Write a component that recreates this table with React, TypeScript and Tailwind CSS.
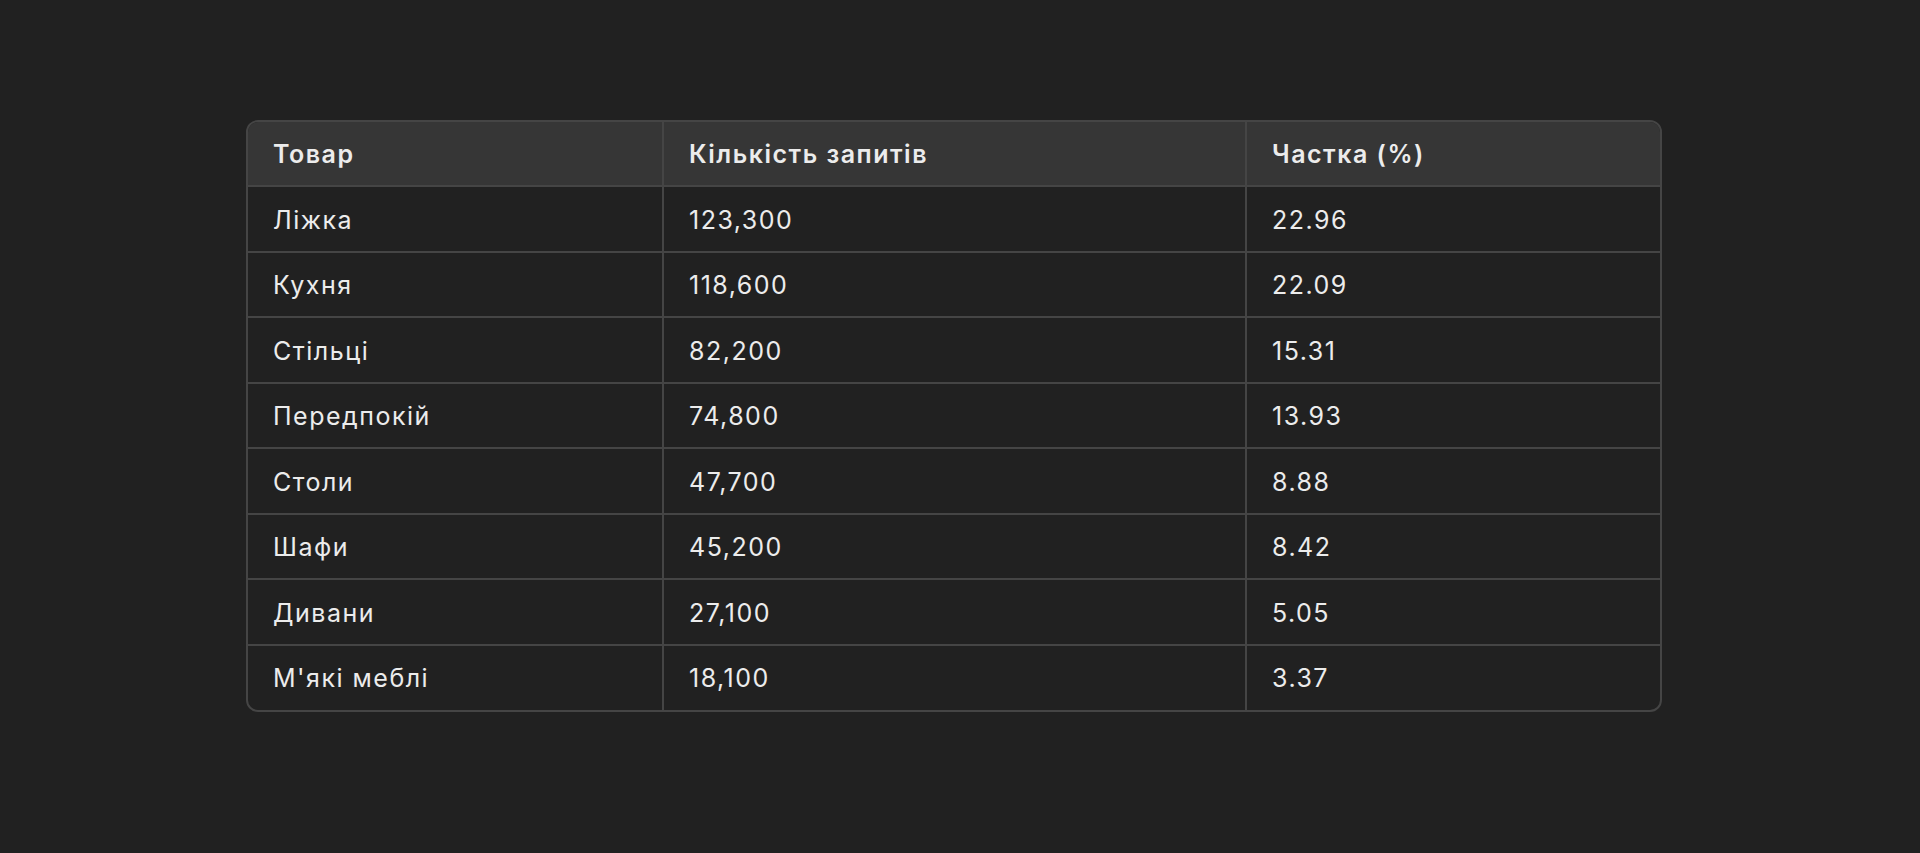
import React from "react";

const rows: [string, string, string][] = [
  ["Ліжка", "123,300", "22.96"],
  ["Кухня", "118,600", "22.09"],
  ["Стільці", "82,200", "15.31"],
  ["Передпокій", "74,800", "13.93"],
  ["Столи", "47,700", "8.88"],
  ["Шафи", "45,200", "8.42"],
  ["Дивани", "27,100", "5.05"],
  ["М'які меблі", "18,100", "3.37"],
];

export default function App() {
  return (
    <div
      className="w-[1920px] h-[853px] bg-[#212121] pt-[120px] pl-[246px] text-[#ececec]"
      style={{ fontFamily: "Inter, 'Noto Sans', 'DejaVu Sans', sans-serif" }}
    >
      <div className="w-[1416px] border-2 border-[#454545] rounded-[12px] overflow-hidden">
        <div className="grid grid-cols-[416px_583px_1fr] h-[65px] bg-[#363636] border-b-2 border-[#454545] text-[25px] tracking-[1.5px] font-semibold">
          <div className="flex items-center pl-[25px] pt-[2px] border-r-2 border-[#454545]">Товар</div>
          <div className="flex items-center pl-[25px] pt-[2px] border-r-2 border-[#454545]">Кількість запитів</div>
          <div className="flex items-center pl-[25px] pt-[2px]">Частка (%)</div>
        </div>
        {rows.map((r, i) => (
          <div
            key={i}
            className={
              "grid grid-cols-[416px_583px_1fr] text-[25px] tracking-[1.5px] " +
              (i < rows.length - 1 ? "h-[65.5px] border-b-2 border-[#454545]" : "h-[64px]")
            }
          >
            <div className="flex items-center pl-[25px] pt-[3px] border-r-2 border-[#454545]">{r[0]}</div>
            <div className="flex items-center pl-[25px] pt-[3px] border-r-2 border-[#454545]">{r[1]}</div>
            <div className="flex items-center pl-[25px] pt-[3px]">{r[2]}</div>
          </div>
        ))}
      </div>
    </div>
  );
}
